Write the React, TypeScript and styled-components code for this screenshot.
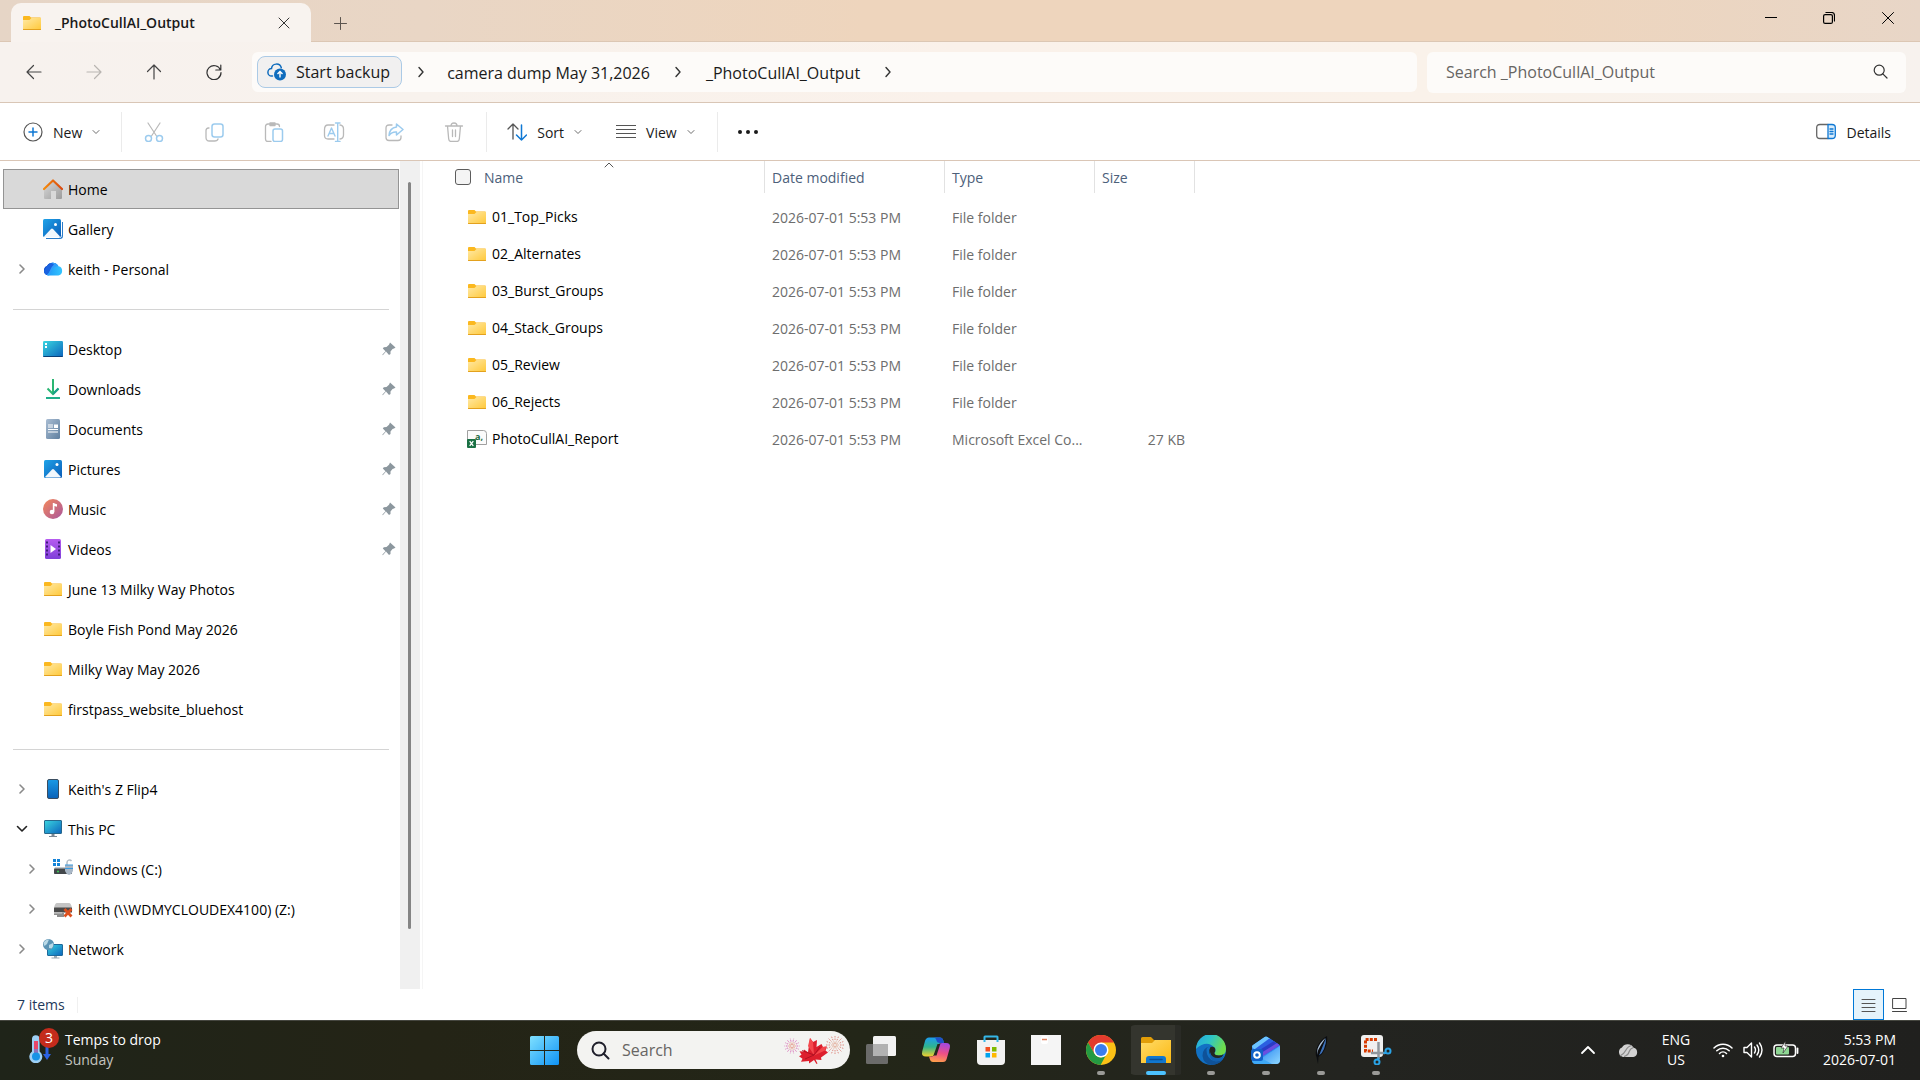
import React from "react";
import styled, { createGlobalStyle } from "styled-components";

const GlobalStyle = createGlobalStyle`
  *, *::before, *::after { box-sizing: border-box; }
  html, body { margin: 0; padding: 0; background: #fff; }
  body, button, input, table {
    font-family: "Open Sans", "Noto Sans", "Segoe UI", sans-serif;
    font-size: 14px;
    line-height: 20px;
    color: #1a1a1a;
  }
  button { border: 0; background: none; padding: 0; margin: 0; cursor: default; }
  svg { display: block; flex: none; }
`;

const Screen = styled.div`
  display: flex;
  flex-direction: column;
  min-height: 100vh;
`;

/* ---------- title bar ---------- */

const TitleBar = styled.header`
  display: flex;
  height: 42px;
  padding: 3px 2px 0 11px;
  background: linear-gradient(90deg, #e6d5c6 0%, #e9d6c5 22%, #eed5bd 45%, #eed5bd 80%, #e8d6c7 100%);
  box-shadow: inset 0 -1px 0 #dcc7b4;
`;

const Tab = styled.div`
  display: flex;
  align-items: center;
  width: 300px;
  padding: 0 20px 0 12px;
  gap: 14px;
  border-radius: 10px 10px 0 0;
  background: #f8f3ef;
`;

const TabTitle = styled.span`
  flex: 1;
  font-weight: 600;
`;

const IconButton = styled.button<{ $w?: number; $h?: number }>`
  display: flex;
  align-items: center;
  justify-content: center;
  flex: none;
  width: ${(p) => p.$w ?? 28}px;
  height: ${(p) => p.$h ?? 28}px;
`;

const NewTab = styled(IconButton)`
  margin: 6px auto 0 15px;
`;

const WindowButtons = styled.div`
  display: flex;
  height: 30px;
`;

/* ---------- navigation bar ---------- */

const NavBar = styled.div`
  display: flex;
  align-items: center;
  height: 61px;
  padding: 0 14px 0 4px;
  background: linear-gradient(90deg, #f7f2ee 0%, #f8f2ed 22%, #faf1ea 50%, #faf2ea 75%, #f7f2ee 100%);
  border-bottom: 1px solid #d9c6b6;
`;

const NavButtons = styled.div`
  display: flex;
  margin-right: 8px;
`;

const AddressBar = styled.nav`
  display: flex;
  align-items: center;
  flex: 1;
  height: 40px;
  padding-left: 5px;
  border-radius: 6px;
  background: #fdfbf9;
`;

const BackupButton = styled.button`
  display: flex;
  align-items: center;
  height: 32px;
  padding: 0 11px 0 9px;
  gap: 9px;
  border: 1px solid #abcae6;
  border-radius: 8px;
  background: #f1f0f0;
  font-size: 16px;
`;

const Crumb = styled.a`
  padding-top: 1px;
  font-size: 16px;
  line-height: 24px;
  color: #1a1a1a;
  text-decoration: none;
`;

const CrumbArrow = styled.span<{ $first?: boolean }>`
  display: flex;
  justify-content: center;
  width: ${(p) => (p.$first ? 37 : 56)}px;
  margin-right: ${(p) => (p.$first ? 8 : 0)}px;
`;

const SearchField = styled.label`
  display: flex;
  align-items: center;
  width: 479px;
  height: 41px;
  margin-left: 10px;
  padding: 0 17px 0 19px;
  border-radius: 6px;
  background: #fdfbf9;
`;

const TextInput = styled.input`
  flex: 1;
  min-width: 0;
  padding: 0;
  border: 0;
  outline: 0;
  background: none;
  font-size: 16px;
  line-height: 24px;
  &::placeholder { color: #676563; opacity: 1; }
`;

/* ---------- command bar ---------- */

const CommandBar = styled.div`
  display: flex;
  align-items: center;
  height: 58px;
  padding: 0 23px;
  border-bottom: 1px solid #dac6b6;
  background: #fff;
`;

const Command = styled.button<{ $gap?: number }>`
  display: flex;
  align-items: center;
  height: 40px;
  gap: ${(p) => p.$gap ?? 10}px;
`;

const Label = styled.span`
  padding-top: 2px;
`;

const CommandGroup = styled.div<{ $gap?: number; $pad: string }>`
  display: flex;
  align-items: center;
  height: 40px;
  gap: ${(p) => p.$gap ?? 0}px;
  padding: ${(p) => p.$pad};
  border-right: 1px solid #ebebeb;
`;

const DetailsSlot = styled.div`
  margin-left: auto;
  padding-right: 6px;
`;

/* ---------- body ---------- */

const Body = styled.div`
  display: flex;
  flex: 1;
`;

const Sidebar = styled.nav`
  width: 400px;
  padding: 8px 1px 0 3px;
`;

const TreeRow = styled.button<{ $selected?: boolean; $depth?: number }>`
  display: flex;
  align-items: center;
  width: 100%;
  height: 40px;
  padding: 0 2px 0 ${(p) => 10 + (p.$depth ?? 0) * 10}px;
  border: 1px solid ${(p) => (p.$selected ? "#949494" : "transparent")};
  background: ${(p) => (p.$selected ? "#d9d9d9" : "transparent")};
  color: #000;
  text-align: left;
`;

const Twisty = styled.span`
  display: flex;
  justify-content: center;
  width: 16px;
  margin-right: 13px;
`;

const RowLabel = styled(Label)`
  flex: 1;
  padding-left: 5px;
  white-space: nowrap;
`;

const Separator = styled.hr`
  height: 1px;
  margin: 20px 10px 19px;
  border: 0;
  background: #d4d4d4;
`;

const ScrollTrack = styled.div`
  display: flex;
  width: 20px;
  padding: 21px 0 60px 8px;
  background: #f0f0f0;
`;

const ScrollThumb = styled.div`
  width: 3px;
  border-radius: 2px;
  background: #858585;
`;

const FilePane = styled.main`
  flex: 1;
  margin-left: 2px;
  border-left: 1px solid #f5f5f5;
`;

const FileTable = styled.table`
  table-layout: fixed;
  width: 772px;
  border-collapse: collapse;
  th, td { padding: 0; font-weight: 400; text-align: left; }
  th { height: 38px; vertical-align: top; }
  td { height: 37px; color: #6d6d6d; padding-left: 7px; }
  td:first-child { padding-left: 44px; color: #000; }
`;

const Col = styled.col<{ $w: number }>`
  width: ${(p) => p.$w}px;
`;

const HeadCell = styled.div<{ $first?: boolean }>`
  position: relative;
  display: flex;
  align-items: center;
  height: 32px;
  gap: 13px;
  padding-left: ${(p) => (p.$first ? 32 : 7)}px;
  border-right: 1px solid #e2e2e2;
  color: #4c607a;
`;

const SortMark = styled.span`
  position: absolute;
  top: 1px;
  left: 50%;
  margin-left: 10px;
`;

const Tick = styled.input`
  appearance: none;
  width: 16px;
  height: 16px;
  margin: 0;
  border: 1px solid #5c5c5c;
  border-radius: 3px;
  background: #f4f4f4;
`;

const FileName = styled.span`
  display: flex;
  gap: 5px;
  padding-bottom: 1px;
`;

const Clip = styled.span`
  display: block;
  overflow: hidden;
  white-space: nowrap;
  text-overflow: ellipsis;
  padding-right: 2px;
`;

const SizeCell = styled.td`
  && { text-align: right; padding-right: 10px; }
`;

/* ---------- status bar ---------- */

const StatusBar = styled.footer`
  display: flex;
  align-items: center;
  height: 31px;
  padding: 0 6px 0 17px;
  color: #1e395b;
`;

const StatusText = styled.span`
  padding-right: 12px;
  line-height: 16px;
  border-right: 1px solid #f0f0f0;
`;

const ViewButtons = styled.div`
  display: flex;
  margin-left: auto;
`;

const ViewButton = styled(IconButton)<{ $on?: boolean }>`
  border: 1px solid ${(p) => (p.$on ? "#0078d7" : "transparent")};
  background: ${(p) => (p.$on ? "#e5f3fb" : "transparent")};
`;

/* ---------- taskbar ---------- */

const Taskbar = styled.footer`
  display: grid;
  grid-template-columns: 1fr auto 1fr;
  align-items: center;
  height: 60px;
  padding-bottom: 1px;
  border-top: 1px solid #45463f;
  background: linear-gradient(90deg, #1f2419 0%, #242416 22%, #232618 45%, #232420 70%, #20201e 100%);
`;

const Weather = styled.button`
  display: flex;
  align-items: center;
  justify-self: start;
  padding-left: 29px;
  gap: 6px;
  text-align: left;
`;

const WeatherIcon = styled.span`
  position: relative;
  width: 30px;
  height: 44px;
  padding-top: 7px;
`;

const Badge = styled.span`
  position: absolute;
  top: 0;
  right: 0;
  width: 20px;
  height: 20px;
  border-radius: 50%;
  background: #c42b1c;
  color: #fff;
  text-align: center;
`;

const Line = styled.span<{ $dim?: boolean }>`
  display: block;
  color: ${(p) => (p.$dim ? "#c4c4c0" : "#fff")};
`;

const TaskCluster = styled.div`
  display: flex;
  align-items: center;
`;

const TaskSearch = styled.label`
  display: flex;
  align-items: center;
  width: 273px;
  height: 38px;
  margin: 0 4px 0 5px;
  padding: 0 6px 0 14px;
  gap: 12px;
  border-radius: 19px;
  background: #f3f3f1;
`;

const TaskButton = styled.button<{ $active?: boolean }>`
  position: relative;
  width: 55px;
  height: 50px;
  padding: 10px 0 10px 12px;
  ${(p) =>
    p.$active &&
    `
    border-radius: 6px;
    background: linear-gradient(90deg, transparent 2px, #34352e 2px 46px, #2a2b26 46px 52px, transparent 52px);
  `}
`;

const RunMark = styled.span<{ $active?: boolean }>`
  position: absolute;
  bottom: 0;
  left: ${(p) => (p.$active ? 17 : 23)}px;
  width: ${(p) => (p.$active ? 20 : 8)}px;
  height: 4px;
  border-radius: 2px;
  background: ${(p) => (p.$active ? "#4cc2ff" : "#9a9a97")};
`;

const Tray = styled.div`
  display: flex;
  align-items: center;
  justify-self: end;
  padding-right: 24px;
`;

const TrayButton = styled.button<{ $w: number }>`
  display: flex;
  align-items: center;
  justify-content: center;
  width: ${(p) => p.$w}px;
  height: 48px;
  text-align: center;
`;

const TrayStatus = styled.button`
  display: flex;
  align-items: center;
  gap: 10px;
  margin: 0 24px 0 9px;
`;

const Clock = styled.button`
  text-align: right;
`;

/* ---------- icons ---------- */

type Stroke = { w: number; h?: number; d: string; c?: string; s?: number; children?: React.ReactNode };
const Glyph = ({ w, h = w, d, c = "#1a1a1a", s = 1, children }: Stroke) => (
  <svg width={w} height={h} viewBox={`0 0 ${w} ${h}`} fill="none" stroke={c} strokeWidth={s} strokeLinecap="round" strokeLinejoin="round" aria-hidden>
    <path d={d} />
    {children}
  </svg>
);

const ChevronRight = ({ c = "#8a8a8a", s = 2 }: { c?: string; s?: number }) => <Glyph w={8} h={12} d="M2 2l4 4-4 4" c={c} s={s} />;
const CrumbChevron = () => <Glyph w={8} h={12} d="M2 1.5l4 4.5-4 4.5" c="#333" s={1.4} />;
const SmallDown = () => <Glyph w={8} h={6} d="M1 1.5l3 3 3-3" c="#6d6d6d" />;

const G = "#b9b9b9";
const B = "#9ccbee";

const FolderIcon = ({ w = 20 }: { w?: number }) => (
  <svg width={w} height="20" viewBox={w === 18 ? "1 0 18 20" : "0 0 20 20"} aria-hidden>
    <defs>
      <linearGradient id="fold" x1="0" y1="0" x2="1" y2="1">
        <stop offset="0" stopColor="#ffe9a6" />
        <stop offset="1" stopColor="#ffc93b" />
      </linearGradient>
    </defs>
    <path d="M1 4q0-1 1-1h5.500l1.500 1.500H18q1 0 1 1V8H1z" fill="#fbb81f" />
    <path d="M1 7h6.500L9.500 5H19v11.500H1z" fill="url(#fold)" />
    <path d="M1 16h18v.5q0 .5-.8.500H1.800q-.8 0-.8-.5z" fill="#e3a11e" />
  </svg>
);

const HomeIcon = () => (
  <svg width="20" height="20" viewBox="0 0 20 20" aria-hidden>
    <defs>
      <linearGradient id="hb" x1="0" y1="0" x2="1" y2="1"><stop offset="0" stopColor="#d9d9d9" /><stop offset="1" stopColor="#9c9c9c" /></linearGradient>
      <linearGradient id="hr" x1="0" y1="0" x2="1" y2="0"><stop offset="0" stopColor="#f58b0c" /><stop offset="1" stopColor="#d9480f" /></linearGradient>
    </defs>
    <path d="M1 10l9-8 9 8v9q0 1-1 1h-5v-8H8v8H2q-1 0-1-1z" fill="url(#hb)" />
    <path d="M1 10l9-8.500 9 8.500" fill="none" stroke="url(#hr)" strokeWidth="2.200" strokeLinecap="round" strokeLinejoin="round" />
  </svg>
);

const PictureIcon = ({ stack }: { stack?: boolean }) => (
  <svg width="20" height="20" viewBox="0 0 20 20" aria-hidden>
    <defs><linearGradient id="pic" x1="0" y1="0" x2="1" y2="1"><stop offset="0" stopColor="#1fa3e8" /><stop offset="1" stopColor="#0a5cb8" /></linearGradient></defs>
    {stack && <path d="M19 3v14q0 2-2 2H3" fill="none" stroke="#2b7cc9" strokeWidth="2" />}
    {stack && <path d="M18.500 2v14.500q0 2-2 2H2" fill="none" stroke="#fff" strokeWidth="1" />}
    <rect x={stack ? 0 : 1} y={stack ? 0 : 1} width="18" height="18" rx="1.500" fill="url(#pic)" />
    <path d={stack ? "M1 17.500l7-7.500q1-1 2 0l7 7.500q-.5.500-1 .5H2q-.6 0-1-.5z" : "M2 18l7-7.500q1-1 2 0l7 7.500q-.4.400-1 .4H3q-.6 0-1-.4z"} fill="#f2f8fd" />
    <circle cx={stack ? 12.5 : 14} cy="5.500" r="1.500" fill="#fff" />
  </svg>
);

const OneDriveIcon = () => (
  <svg width="20" height="20" viewBox="0 0 20 20" aria-hidden>
    <defs>
      <clipPath id="cloud">
        <path d="M5 16.500A5 5 0 0 1 4 7A6.500 6.500 0 0 1 15.500 7.300A4.700 4.700 0 0 1 15.300 16.500z" />
      </clipPath>
      <linearGradient id="od" x1="0" y1="0" x2="1" y2="0"><stop offset="0" stopColor="#1a8cf5" /><stop offset="1" stopColor="#35c8ff" /></linearGradient>
    </defs>
    <g clipPath="url(#cloud)">
      <rect width="20" height="20" fill="url(#od)" />
      <path d="M0 0h9L3.500 17H0z" fill="#1747c4" />
      <path d="M2 17q4-2 5.500-6T14 5.500L10 2 4 7 0 13z" fill="#1a63e0" />
      <path d="M6 2h9l2 5q-5-.5-7 2.500T6 17H2q4-2 5-5.500T11 5.500z" fill="#2f9dfa" />
    </g>
  </svg>
);

const DesktopIcon = () => (
  <svg width="20" height="20" viewBox="0 0 20 20" aria-hidden>
    <defs><linearGradient id="dk" x1="0" y1="0" x2="1" y2="1"><stop offset="0" stopColor="#3ad6e0" /><stop offset="1" stopColor="#0c64bd" /></linearGradient></defs>
    <rect y="2" width="20" height="16" rx="1.200" fill="url(#dk)" />
    <path d="M0 17h20q0 1-1.200 1H1.200Q0 18 0 17z" fill="#0a3f78" />
    <path d="M2 4h2v2H2zM2 7h2v2H2z" fill="#fff" />
  </svg>
);

const DownloadIcon = () => (
  <svg width="20" height="20" viewBox="0 0 20 20" fill="none" strokeWidth="2" aria-hidden>
    <path d="M10 0v15M4.500 9.500L10 15l5.500-5.500" stroke="#2bb673" />
    <path d="M10 15l5.500-5.500" stroke="#1aa08c" />
    <path d="M3 19h14" stroke="#1fae8a" />
  </svg>
);

const DocumentIcon = () => (
  <svg width="20" height="20" viewBox="0 0 20 20" aria-hidden>
    <defs><linearGradient id="dc" x1="0" y1="0" x2="1" y2="1"><stop offset="0" stopColor="#a9bdd3" /><stop offset="1" stopColor="#5f7f9f" /></linearGradient></defs>
    <rect x="3" width="14" height="20" rx="1.500" fill="url(#dc)" />
    <path d="M5 6h5M5 8h5M5 10.500h10M5 13h10" stroke="#fff" strokeWidth="1.200" />
    <rect x="11" y="5.500" width="4" height="3.500" fill="#fff" />
  </svg>
);

const MusicIcon = () => (
  <svg width="20" height="20" viewBox="0 0 20 20" aria-hidden>
    <defs><linearGradient id="mu" x1="0" y1="0" x2="1" y2="1"><stop offset="0" stopColor="#f5895a" /><stop offset="1" stopColor="#a9569d" /></linearGradient></defs>
    <circle cx="10" cy="10" r="10" fill="url(#mu)" />
    <path d="M10 4l4 1.200v2.500L11.200 7v6" fill="#fff" />
    <rect x="9.800" y="4" width="1.500" height="9" fill="#fff" />
    <circle cx="9" cy="13" r="2.300" fill="#fff" />
  </svg>
);

const VideoIcon = () => (
  <svg width="20" height="20" viewBox="0 0 20 20" aria-hidden>
    <defs><linearGradient id="vi" x1="0" y1="0" x2="0" y2="1"><stop offset="0" stopColor="#b65cf0" /><stop offset="1" stopColor="#7f3fd9" /></linearGradient></defs>
    <rect x="2" width="16" height="20" rx="1.500" fill="url(#vi)" />
    <path d="M4 2.500v16M16 2.500v16" stroke="#3f1c7a" strokeWidth="2" strokeDasharray="2 2" />
    <path d="M7.500 6v8l5.500-4z" fill="#fff" />
  </svg>
);

const PhoneIcon = () => (
  <svg width="20" height="20" viewBox="0 0 20 20" aria-hidden>
    <defs><linearGradient id="ph" x1="0" y1="0" x2="0" y2="1"><stop offset="0" stopColor="#1a9ae6" /><stop offset="1" stopColor="#0a62b8" /></linearGradient></defs>
    <rect x="4.500" y=".5" width="11" height="19" rx="1.500" fill="url(#ph)" stroke="#3b4d60" />
  </svg>
);

const PcIcon = () => (
  <svg width="20" height="20" viewBox="0 0 20 20" aria-hidden>
    <path d="M8.500 15h3v2H14v1H6v-1h2.500z" fill="#7c8894" />
    <rect x="1.500" y="1.500" width="17" height="13" rx=".5" fill="url(#dk)" stroke="#27688c" />
  </svg>
);

const DriveIcon = () => (
  <svg width="20" height="20" viewBox="0 0 20 20" aria-hidden>
    <path d="M0 0h3v3H0zM4 0h3v3H4zM0 4h3v3H0zM4 4h3v3H4z" fill="#1584d8" />
    <path d="M2 8h16v2H1z" fill="#c6cacd" />
    <rect x="1" y="9.500" width="18" height="5.500" rx=".8" fill="#43474b" />
    <circle cx="5" cy="12.500" r="1" fill="#3fd15a" />
    <path d="M14 6V3.500a2.500 2.500 0 0 1 4.500-1.500" fill="none" stroke="#b4bdc6" strokeWidth="1.500" />
    <path d="M12 6h8v6q-1 3-4 4-3-1-4-4z" fill="#a9b7c6" />
    <path d="M12 6h8M12 9.500h8" stroke="#3a9be0" strokeWidth="1" />
  </svg>
);

const NetDriveIcon = () => (
  <svg width="20" height="20" viewBox="0 0 20 20" aria-hidden>
    <path d="M4 4h12q2 0 3 5H1q1-5 3-5z" fill="#c4c4c4" />
    <rect x="1" y="8.500" width="18" height="5" rx=".5" fill="#4a4a4a" />
    <path d="M1 14h10v4H4v-2H1z" fill="#8d8d8d" />
    <path d="M1 14h8" stroke="#ccc" />
    <path d="M11.500 10l7 7.500m0-7.500l-7 7.500" stroke="#dd4f1e" strokeWidth="2.700" />
  </svg>
);

const NetworkIcon = () => (
  <svg width="20" height="20" viewBox="0 0 20 20" aria-hidden>
    <path d="M11 16h3v2.500h2.500v1h-8v-1H11z" fill="#9aa7b2" />
    <rect x="4.500" y="5.500" width="15" height="11" rx=".5" fill="url(#dk)" stroke="#1e6a9c" />
    <circle cx="5.500" cy="5.500" r="5.500" fill="#5b93b4" />
    <path d="M1 3q2-3 5-2.500L4 5 1.500 7Q0 5 1 3zM6 6l4-2q1 3-1.500 5.500L6 9z" fill="#b9d9e6" />
  </svg>
);

const PinIcon = () => (
  <svg width="14" height="14" viewBox="0 0 14 14" aria-hidden>
    <path d="M8 .5l5.500 5-1.500 1-1.500.5-2 2.500v2.500L7 13l-3-3.500L.8 13.200l-.5-.4L3.500 9.300.8 6.500l1-1.200 2.700-.3 2.500-2.300z" fill="#8c979e" />
  </svg>
);

const CsvIcon = () => (
  <svg width="20" height="20" viewBox="0 0 20 20" aria-hidden>
    <path d="M.5 1.500h16q3 0 3 3v11h-19z" fill="#fbfbfb" stroke="#a0a0a0" />
    <text x="8" y="11" fontSize="9" fontWeight="700" fill="#1c6b41" fontFamily="Open Sans, sans-serif">a,</text>
    <rect y="10" width="9" height="9" rx="1" fill="#1a7044" />
    <path d="M2.700 12.200l3.600 4.600m0-4.600l-3.600 4.600" stroke="#fff" strokeWidth="1.300" />
  </svg>
);

const BackupIcon = () => (
  <svg width="20" height="20" viewBox="0 0 20 20" fill="none" aria-hidden>
    <path d="M5.500 14H4.700a3.700 3.700 0 0 1-.2-7.400A5 5 0 0 1 14.300 5.800" stroke="#0f6cbd" strokeWidth="1.500" strokeLinecap="round" />
    <circle cx="13" cy="12.500" r="6" fill="#0f6cbd" />
    <path d="M13 15.500v-6M10.500 12l2.500-2.500 2.500 2.500" stroke="#fff" strokeWidth="1.400" />
  </svg>
);

/* taskbar pictures */

const StartIcon = () => (
  <svg width="30" height="30" viewBox="-1 -1 30 30" aria-hidden>
    <defs><linearGradient id="st" x1="0" y1="0" x2="1" y2="1"><stop offset="0" stopColor="#7fe0ff" /><stop offset="1" stopColor="#0f93f5" /></linearGradient></defs>
    <path d="M1.500 0H14v14H0V1.500Q0 0 1.500 0zM15 0h12.500Q29 0 29 1.500V14H15zM0 15h14v14H1.500Q0 29 0 27.500zM15 15h14v12.500q0 1.500-1.500 1.500H15z" fill="url(#st)" />
  </svg>
);

const rays = (cx: number, cy: number, r0: number, r: number, n: number) =>
  Array.from({ length: n }, (_, i) => {
    const a = (i / n) * Math.PI * 2;
    return `M${cx + Math.cos(a) * r0} ${cy + Math.sin(a) * r0}L${cx + Math.cos(a) * r} ${cy + Math.sin(a) * r}`;
  }).join("");

const MapleIcon = () => (
  <svg width="60" height="30" viewBox="0 0 60 30" aria-hidden>
    <path d={rays(8, 11, 4.5, 7.5, 14)} stroke="#d871b8" strokeWidth="1" strokeDasharray="1.500 .8" />
    <path d={rays(8, 11, 1, 4, 10)} stroke="#e39a8a" strokeWidth=".8" />
    <path d={rays(51, 10, 5, 9, 16)} stroke="#d8736b" strokeWidth=".8" strokeDasharray="1.500 1" />
    <path d={rays(51, 10, 1, 4, 10)} stroke="#e0a08c" strokeWidth=".7" />
    <path d="M26 3l3 4 4-2-.5 7 5-3 1.500 3 4-.5-1.500 4 2.500 2-7 5 .5 2.500-6-.5 2 4-1 .6-2.500-4.200-5 3.500v-2.500l-8 .8 1.500-3-3.500-2.500 2.500-1.500-2-3.500 4 .3.500-2 4 2.800z" fill="#dd1f2d" />
    <path d="M26 3l3 4 1 13-6-9zM38.500 12l4-.5-1.500 4-11 5z" fill="#f4484d" />
    <path d="M30 20l-12-4.500M30 20l-9 4M30 20l6-8" stroke="#a50f20" strokeWidth=".8" />
  </svg>
);

const TaskViewIcon = () => (
  <svg width="30" height="30" viewBox="0 0 30 30" aria-hidden>
    <rect x="0" y="9" width="22" height="20" rx="1.500" fill="#6b6b6a" />
    <rect x="7" y="1" width="23" height="20" rx="1.500" fill="#f2f2f2" />
    <path d="M7 9h15v12H8.500Q7 21 7 19.500z" fill="#b2b2b2" />
  </svg>
);

const CopilotIcon = () => (
  <svg width="30" height="30" viewBox="0 0 30 30" aria-hidden>
    <defs>
      <linearGradient id="cp1" x1="0" y1="0" x2="0" y2="1"><stop offset="0" stopColor="#1c9df0" /><stop offset=".5" stopColor="#2fb58c" /><stop offset="1" stopColor="#f4d02c" /></linearGradient>
      <linearGradient id="cp2" x1=".5" y1="0" x2=".3" y2="1"><stop offset="0" stopColor="#a648dc" /><stop offset=".5" stopColor="#ee4f86" /><stop offset="1" stopColor="#ffa04a" /></linearGradient>
    </defs>
    <path d="M8 2.500h11q2.500 0 3.300 3L23 8h-3q-2 0-2.800 2.500L13.500 19q-1 2.500-4 2.500H5q-5 0-3.800-5L4 6q1-3.500 4-3.500z" fill="url(#cp1)" />
    <path d="M13 2.500h6q2.500 0 3.300 3L23 8h-4q-3 0-3.500-2.500t-2.500-3z" fill="#1f50c8" />
    <path d="M22 27H12q-2.500 0-3.200-3L8 21.500h2.500q2.500 0 3.500-3l3-8Q18 8 21 8h4q5 0 3.800 5l-3 10.500Q25 27 22 27z" fill="url(#cp2)" />
    <path d="M16.500 9h2.800L15.500 20.500h-3z" fill="#26281f" />
  </svg>
);

const StoreIcon = () => (
  <svg width="30" height="30" viewBox="0 0 30 30" aria-hidden>
    <path d="M1 5h28v21q0 4-4 4H5q-4 0-4-4z" fill="#f2f2f2" />
    <path d="M8.500 7V2q0-.5.500-.5h12q.5 0 .5.500v5" fill="none" stroke="#35b7e8" strokeWidth="2" />
    <path d="M9.500 12H14v4.500H9.500z" fill="#f25022" /><path d="M16 12h4.500v4.500H16z" fill="#7fba00" />
    <path d="M9.500 18H14v4.500H9.500z" fill="#00a4ef" /><path d="M16 18h4.500v4.500H16z" fill="#ffb900" />
  </svg>
);

const BlankAppIcon = () => (
  <svg width="30" height="30" viewBox="0 0 30 30" aria-hidden>
    <rect width="30" height="30" fill="#f5f5f5" />
    <rect x="10" y="1" width="7" height="8" rx="2" fill="#fff" />
    <path d="M11 4.500h5" stroke="#e08260" strokeWidth="1.500" />
  </svg>
);

const ChromeIcon = () => (
  <svg width="30" height="30" viewBox="0 0 30 30" aria-hidden>
    <circle cx="15" cy="15" r="15" fill="#fbc116" />
    <path d="M2 7.500A15 15 0 0 1 28 7.500H15L8.500 18.800z" fill="#e33b2e" />
    <path d="M2 7.500l6.500 11.300Q11 22.500 15 22.500l4.500-1.500-4.900 9A15 15 0 0 1 2 7.500z" fill="#249a42" />
    <circle cx="15" cy="15" r="7.500" fill="#fff" /><circle cx="15" cy="15" r="6" fill="#3b7ded" />
  </svg>
);

const ExplorerIcon = () => (
  <svg width="30" height="30" viewBox="0 0 30 30" aria-hidden>
    <defs><linearGradient id="ex" x1="0" y1="0" x2="1" y2="1"><stop offset="0" stopColor="#ffdb68" /><stop offset="1" stopColor="#fcb912" /></linearGradient></defs>
    <path d="M0 3.500Q0 2 1.500 2H10l3 3h15.500Q30 5 30 6.500V12H0z" fill="#e19d08" />
    <path d="M0 8h11l3-3h16v23H0z" fill="url(#ex)" />
    <path d="M5 28v-4q0-3 3-3h14q3 0 3 3v4z" fill="#1177cf" />
    <path d="M9 24.500h12" stroke="#0b4f96" strokeWidth="1.500" strokeLinecap="round" />
  </svg>
);

const EdgeIcon = () => (
  <svg width="30" height="30" viewBox="0 0 30 30" aria-hidden>
    <defs>
      <linearGradient id="ed" x1="0" y1="0" x2="1" y2=".4"><stop offset="0" stopColor="#24a5e2" /><stop offset=".5" stopColor="#2ec5c7" /><stop offset="1" stopColor="#6fdc4c" /></linearGradient>
    </defs>
    <circle cx="15" cy="15" r="15" fill="#1271c4" />
    <path d="M0 14A15 15 0 0 1 30 14q0 6.500-7 6.500-5 0-4.500-2.500 2-3 0-5.500Q13 6.500 5.500 10 1.500 12 0 14z" fill="url(#ed)" />
    <path d="M10.500 15q0 9 8 11 5 1 9-2.500-4 6.500-12 6.500-8-1-9-9 0-9 8-9.500-4 0-4 3.500z" fill="#0f5299" />
    <path d="M14.500 12q4.500-1 4.800 2.500.2 2-1 3.500.5 2.500 4.700 2.500 3 0 4.500-1.500-1 4-6 4.500-7 .5-8-5.500-.5-4 1-6z" fill="#232420" />
    <path d="M14 17q1.500 6 8 6 3.500 0 6-2.500l-1.500 4q-4 2.500-8.500 1.500-5-2-4-9z" fill="#1260b0" />
  </svg>
);

const OutlookIcon = () => (
  <svg width="30" height="30" viewBox="0 0 30 30" aria-hidden>
    <defs>
      <linearGradient id="ol" x1="0" y1="0" x2="1" y2="1"><stop offset="0" stopColor="#1f7df0" /><stop offset="1" stopColor="#8fd8ff" /></linearGradient>
      <clipPath id="olc"><path d="M2 10L13.500 2q1.500-1 3 0L28 9.500q1 .8 1 2V25q0 4-4 4H5q-4 0-4-4V12q0-1.300 1-2z" /></clipPath>
    </defs>
    <g clipPath="url(#olc)">
      <rect width="30" height="30" fill="#2f8cf0" />
      <path d="M0 11L15 1l5 3L4 15z" fill="#6cc4ff" />
      <path d="M19 3l5 3.500L8 17l-4-3z" fill="#2b5fe0" />
      <path d="M23 6l6 4-16 10-6-4z" fill="#2a3cc6" />
      <path d="M29 10L12 21l-2-3L26 8z" fill="#6a4fe0" />
      <path d="M29 11v18H9q-3-1-1-4z" fill="url(#ol)" />
      <path d="M1 18l20 11H1z" fill="#3fa9f7" />
    </g>
    <rect x="0" y="14" width="12" height="12" rx="2.500" fill="#1262c8" />
    <circle cx="6" cy="20" r="2.800" fill="none" stroke="#fff" strokeWidth="2" />
  </svg>
);

const FeatherIcon = () => (
  <svg width="30" height="30" viewBox="0 0 30 30" aria-hidden>
    <path d="M21 1q1 6-2 13-2 5-6.500 8l-.500 7-1.500-7q-2-4 1-11Q15 4 21 1z" fill="#0b0d10" />
    <path d="M20 3q.5 5-2 11-1.500 4-5 6.500z" fill="#3d71b8" />
    <path d="M19.500 3Q14 7 11.500 14l-.5 6q1-6 4-10z" fill="#a8bdd4" />
  </svg>
);

const SnipIcon = () => (
  <svg width="32" height="30" viewBox="0 0 32 30" aria-hidden>
    <rect x="0" y="0" width="22" height="22" rx="3" fill="#f0f0f0" />
    <path d="M16 4.500H4.500V16H12" fill="none" stroke="#d83b01" strokeWidth="3" strokeDasharray="3 1.200" />
    <path d="M17.500 7v17M10 18h14" stroke="#8f969c" strokeWidth="2.500" />
    <circle cx="27" cy="16" r="2.500" fill="none" stroke="#2aa3e6" strokeWidth="2" />
    <circle cx="16" cy="27" r="2.500" fill="none" stroke="#2aa3e6" strokeWidth="2" />
    <path d="M22.500 18h2l1-.5M17.500 22.500v1l-.5 1.500" stroke="#2aa3e6" strokeWidth="2" />
  </svg>
);

const ThermometerIcon = () => (
  <svg width="24" height="28" viewBox="0 0 24 28" aria-hidden>
    <path d="M3 4a3.800 3.800 0 0 1 7.600 0v12.500a6.500 6.500 0 1 1-7.600 0z" fill="#9ed0f5" />
    <rect x="5" y="6" width="4" height="14" fill="#e8476a" />
    <rect x="5" y="14" width="4" height="6" fill="#8f6fb8" />
    <circle cx="7" cy="21.500" r="4" fill="#1793e6" />
    <path d="M16.500 10h3v9h2.500l-4 6-4-6h2.500z" fill="#2b62e3" />
  </svg>
);

const TrayCloud = () => (
  <svg width="20" height="14" viewBox="0 0 20 14" aria-hidden>
    <path d="M5 14A5 5 0 0 1 4 4.500A6.500 6.500 0 0 1 15.500 4.800A4.700 4.700 0 0 1 15.300 14z" fill="#d2d2d2" />
    <path d="M2 13Q6 11 8 7t6-4.500M6 13.500q4-1 5-4.500t4.500-4.500" fill="none" stroke="#8b8b8b" strokeWidth="1.200" />
  </svg>
);

/* ---------- data ---------- */

type Node = { label: string; icon: React.ReactNode; open?: boolean; closed?: boolean; depth?: number; pinned?: boolean; selected?: boolean };

const groups: Node[][] = [
  [
    { label: "Home", icon: <HomeIcon />, selected: true },
    { label: "Gallery", icon: <PictureIcon stack /> },
    { label: "keith - Personal", icon: <OneDriveIcon />, closed: true },
  ],
  [
    { label: "Desktop", icon: <DesktopIcon />, pinned: true },
    { label: "Downloads", icon: <DownloadIcon />, pinned: true },
    { label: "Documents", icon: <DocumentIcon />, pinned: true },
    { label: "Pictures", icon: <PictureIcon />, pinned: true },
    { label: "Music", icon: <MusicIcon />, pinned: true },
    { label: "Videos", icon: <VideoIcon />, pinned: true },
    { label: "June 13 Milky Way Photos", icon: <FolderIcon /> },
    { label: "Boyle Fish Pond May 2026", icon: <FolderIcon /> },
    { label: "Milky Way May 2026", icon: <FolderIcon /> },
    { label: "firstpass_website_bluehost", icon: <FolderIcon /> },
  ],
  [
    { label: "Keith's Z Flip4", icon: <PhoneIcon />, closed: true },
    { label: "This PC", icon: <PcIcon />, open: true },
    { label: "Windows (C:)", icon: <DriveIcon />, closed: true, depth: 1 },
    { label: "keith (\\\\WDMYCLOUDEX4100) (Z:)", icon: <NetDriveIcon />, closed: true, depth: 1 },
    { label: "Network", icon: <NetworkIcon />, closed: true },
  ],
];

const stamp = "2026-07-01 5:53 PM";
const files = [
  ...["01_Top_Picks", "02_Alternates", "03_Burst_Groups", "04_Stack_Groups", "05_Review", "06_Rejects"].map((name) => ({
    name,
    type: "File folder",
    size: "",
    icon: <FolderIcon />,
  })),
  { name: "PhotoCullAI_Report", type: "Microsoft Excel Co...", size: "27 KB", icon: <CsvIcon /> },
];

const tasks: { name: string; icon: React.ReactNode; run?: boolean; active?: boolean }[] = [
  { name: "Task view", icon: <TaskViewIcon /> },
  { name: "Copilot", icon: <CopilotIcon /> },
  { name: "Store", icon: <StoreIcon /> },
  { name: "App", icon: <BlankAppIcon /> },
  { name: "Chrome", icon: <ChromeIcon />, run: true },
  { name: "File Explorer", icon: <ExplorerIcon />, run: true, active: true },
  { name: "Edge", icon: <EdgeIcon />, run: true },
  { name: "Outlook", icon: <OutlookIcon />, run: true },
  { name: "Feather", icon: <FeatherIcon />, run: true },
  { name: "Snipping Tool", icon: <SnipIcon />, run: true },
];

const editCommands: { name: string; icon: React.ReactNode }[] = [
  {
    name: "Cut",
    icon: (
      <Glyph w={20} d="M4 1l8.500 13M16 1L7.500 14" c={G} s={1.2}>
        <circle cx="4.500" cy="16.500" r="3" stroke={B} strokeWidth="1.500" /><circle cx="15.500" cy="16.500" r="3" stroke={B} strokeWidth="1.500" />
      </Glyph>
    ),
  },
  {
    name: "Copy",
    icon: (
      <Glyph w={20} d="M5 6H4.500Q2 6 2 8.500v7Q2 19 5.500 19h5q3 0 3.500-2" c={G} s={1.3}>
        <rect x="8" y="2" width="11" height="13" rx="2.500" stroke={B} strokeWidth="1.500" />
      </Glyph>
    ),
  },
  {
    name: "Paste",
    icon: (
      <Glyph w={20} d="M7 19.500H4q-2.500 0-2.500-2.500V4.500Q1.500 2 4 2h9q2.500 0 2.500 2.500M6 1h5v2.500H6z" c={G} s={1.3}>
        <rect x="9" y="7" width="9.500" height="12.500" rx="2" stroke={B} strokeWidth="1.500" />
      </Glyph>
    ),
  },
  {
    name: "Rename",
    icon: (
      <Glyph w={22} h={20} d="M11 17H5q-3.500 0-3.500-3.500v-6Q1.500 3 5 3h6M17 3q3.500.500 3.500 4v6q0 3.500-3.500 4" c={G} s={1.3}>
        <path d="M5 14l3.500-8L12 14M6.200 11.500h4.500M12.500 1h4.500M12.500 19.500H17M14.700 1v18.500" stroke={B} strokeWidth="1.400" />
      </Glyph>
    ),
  },
  {
    name: "Share",
    icon: (
      <Glyph w={20} d="M8 3H5Q2 3 2 6v9.500q0 3 3 3h9q3 0 3-3V14" c={G} s={1.3}>
        <path d="M12.500 2l6.500 5.500-6.500 5.500V10Q8 9.500 5 13.500 5.500 6 12.500 5z" stroke={B} strokeWidth="1.500" />
      </Glyph>
    ),
  },
  {
    name: "Delete",
    icon: <Glyph w={20} d="M1.500 4h17M7 4q0-3 3-3t3 3M3.500 4l1.200 13q.3 2.500 2.500 2.500h5.600q2.200 0 2.500-2.500L16.500 4M8.500 8v6.500M11.500 8v6.500" c={G} s={1.3} />,
  },
];

/* ---------- page ---------- */

const Tree = () => (
  <Sidebar aria-label="Folders">
    {groups.map((group, g) => (
      <React.Fragment key={g}>
        {g > 0 && <Separator />}
        {group.map((n) => (
          <TreeRow key={n.label} $selected={n.selected} $depth={n.depth}>
            <Twisty>
              {n.closed && <ChevronRight s={1.6} />}
              {n.open && <Glyph w={12} h={8} d="M1.500 1.500L6 6l4.500-4.500" c="#222" s={1.6} />}
            </Twisty>
            {n.icon}
            <RowLabel>{n.label}</RowLabel>
            {n.pinned && <PinIcon />}
          </TreeRow>
        ))}
      </React.Fragment>
    ))}
  </Sidebar>
);

export default function App() {
  return (
    <Screen>
      <GlobalStyle />
      <TitleBar>
        <Tab>
          <FolderIcon w={18} />
          <TabTitle>_PhotoCullAI_Output</TabTitle>
          <IconButton $w={14} aria-label="Close tab"><Glyph w={12} d="M1 1l10 10M11 1L1 11" c="#333" /></IconButton>
        </Tab>
        <NewTab aria-label="New tab"><Glyph w={13} d="M6.500 .5v12M.5 6.500h12" c="#5b544e" /></NewTab>
        <WindowButtons>
          <IconButton $w={58} $h={30} aria-label="Minimize"><Glyph w={12} d="M0 5.500h12" c="#000" /></IconButton>
          <IconButton $w={58} $h={30} aria-label="Restore">
            <Glyph w={12} d="M3 .5h5.500q3 0 3 3V9" c="#000" s={1.2}><rect x=".6" y="2.600" width="8.800" height="8.800" rx="1.500" /></Glyph>
          </IconButton>
          <IconButton $w={60} $h={30} aria-label="Close"><Glyph w={12} d="M.5 .5l11 11M11.500 .5l-11 11" c="#000" /></IconButton>
        </WindowButtons>
      </TitleBar>

      <NavBar>
        <NavButtons>
          <IconButton $w={60} aria-label="Back"><Glyph w={16} d="M15 8H1M7.500 1.500L1 8l6.500 6.500" c="#444" s={1.2} /></IconButton>
          <IconButton $w={60} aria-label="Forward"><Glyph w={16} d="M1 8h14M8.500 1.500L15 8l-6.500 6.500" c="#b9b5b1" s={1.2} /></IconButton>
          <IconButton $w={60} aria-label="Up"><Glyph w={16} d="M8 15V1M1.500 7.500L8 1l6.500 6.500" c="#444" s={1.2} /></IconButton>
          <IconButton $w={60} aria-label="Refresh"><Glyph w={16} d="M14.500 6A7 7 0 1 0 15 8.500M14.800 1v5h-5" c="#333" s={1.2} /></IconButton>
        </NavButtons>
        <AddressBar aria-label="Address">
          <BackupButton><BackupIcon />Start backup</BackupButton>
          <CrumbArrow $first><CrumbChevron /></CrumbArrow>
          <Crumb href="#">camera dump May 31,2026</Crumb>
          <CrumbArrow><CrumbChevron /></CrumbArrow>
          <Crumb href="#">_PhotoCullAI_Output</Crumb>
          <CrumbArrow><CrumbChevron /></CrumbArrow>
        </AddressBar>
        <SearchField>
          <TextInput type="text" placeholder="Search _PhotoCullAI_Output" aria-label="Search folder" />
          <Glyph w={16} d="M9.800 9.800l4.200 4.200" c="#333" s={1.2}><circle cx="6.200" cy="6.200" r="5" /></Glyph>
        </SearchField>
      </NavBar>

      <CommandBar>
        <CommandGroup $pad="0 21px 0 0">
          <Command>
            <Glyph w={20} d="M10 6v8M6 10h8" c="#0f78d4" s={1.5}><circle cx="10" cy="10" r="9" stroke="#555" strokeWidth="1.200" /></Glyph>
            <Label>New</Label><SmallDown />
          </Command>
        </CommandGroup>
        <CommandGroup $pad="0 2px">
          {editCommands.map((c) => (
            <IconButton key={c.name} $w={60} $h={40} aria-label={c.name} disabled>{c.icon}</IconButton>
          ))}
        </CommandGroup>
        <CommandGroup $pad="0 22px 0 20px" $gap={34}>
          <Command>
            <Glyph w={20} d="M6 17V2M1 7l5-5 5 5" c="#555" s={1.3}><path d="M14.500 3v15M9.500 13l5 5 5-5" stroke="#0f78d4" strokeWidth="1.500" /></Glyph>
            <Label>Sort</Label><SmallDown />
          </Command>
          <Command>
            <Glyph w={20} d="M0 3.500h20M0 7.500h20M0 11.500h20M0 15.500h20" c="#555" />
            <Label>View</Label><SmallDown />
          </Command>
        </CommandGroup>
        <IconButton $w={60} $h={40} aria-label="More">
          <svg width="22" height="6" viewBox="0 0 22 6" fill="#1a1a1a"><circle cx="3" cy="3" r="2" /><circle cx="11" cy="3" r="2" /><circle cx="19" cy="3" r="2" /></svg>
        </IconButton>
        <DetailsSlot>
          <Command>
            <Glyph w={20} d="M12 2.500H4Q.7 2.500.7 5.500v8q0 3 3.300 3h8" c="#666" s={1.3}>
              <path d="M12 2.500h4q3.300 0 3.300 3v8q0 3-3.300 3h-4z" fill="#d8ecfb" stroke="#0f78d4" />
              <path d="M14 7h3M14 9.500h3M14 12h3" stroke="#0f78d4" />
            </Glyph>
            <Label>Details</Label>
          </Command>
        </DetailsSlot>
      </CommandBar>

      <Body>
        <Tree />
        <ScrollTrack><ScrollThumb /></ScrollTrack>
        <FilePane>
          <FileTable>
            <colgroup><Col $w={342} /><Col $w={180} /><Col $w={150} /><Col $w={100} /></colgroup>
            <thead>
              <tr>
                <th>
                  <HeadCell $first>
                    <Tick type="checkbox" aria-label="Select all" />
                    <Label>Name</Label>
                    <SortMark><Glyph w={10} h={6} d="M1 5l4-4 4 4" c="#555" /></SortMark>
                  </HeadCell>
                </th>
                <th><HeadCell><Label>Date modified</Label></HeadCell></th>
                <th><HeadCell><Label>Type</Label></HeadCell></th>
                <th><HeadCell><Label>Size</Label></HeadCell></th>
              </tr>
            </thead>
            <tbody>
              {files.map((f) => (
                <tr key={f.name}>
                  <td><FileName>{f.icon}{f.name}</FileName></td>
                  <td>{stamp}</td>
                  <td><Clip>{f.type}</Clip></td>
                  <SizeCell>{f.size}</SizeCell>
                </tr>
              ))}
            </tbody>
          </FileTable>
        </FilePane>
      </Body>

      <StatusBar>
        <StatusText>7 items</StatusText>
        <ViewButtons>
          <ViewButton $on $w={31} $h={31} aria-label="Details view"><Glyph w={15} h={15} d="M1 2.500h13M1 6.500h13M1 10.500h13M1 14.500h13" c="#555" /></ViewButton>
          <ViewButton $w={30} $h={31} aria-label="Large icons view"><Glyph w={15} h={15} d="M.5 14.500h14M1 1.500h13v10H1z" c="#444" /></ViewButton>
        </ViewButtons>
      </StatusBar>

      <Taskbar>
        <Weather>
          <WeatherIcon><ThermometerIcon /><Badge>3</Badge></WeatherIcon>
          <span><Line>Temps to drop</Line><Line $dim>Sunday</Line></span>
        </Weather>
        <TaskCluster>
          <IconButton $w={56} $h={50} aria-label="Start"><StartIcon /></IconButton>
          <TaskSearch>
            <Glyph w={19} d="M12.500 12.500l5 5" c="#1f1f2b" s={2}><circle cx="8" cy="8" r="6.500" /></Glyph>
            <TextInput type="text" placeholder="Search" aria-label="Search" />
            <MapleIcon />
          </TaskSearch>
          {tasks.map((t) => (
            <TaskButton key={t.name} $active={t.active} aria-label={t.name}>
              {t.icon}
              {t.run && <RunMark $active={t.active} />}
            </TaskButton>
          ))}
        </TaskCluster>
        <Tray>
          <TrayButton $w={40} aria-label="Hidden icons"><Glyph w={16} h={10} d="M2 8l6-6 6 6" c="#fff" s={1.8} /></TrayButton>
          <TrayButton $w={40} aria-label="OneDrive"><TrayCloud /></TrayButton>
          <TrayButton $w={56}><span><Line>ENG</Line><Line>US</Line></span></TrayButton>
          <TrayStatus aria-label="Network, volume, battery">
            <Glyph w={20} h={16} d="M1 6a12.500 12.500 0 0 1 18 0M3.800 8.800a8.700 8.700 0 0 1 12.400 0M6.500 11.500a5 5 0 0 1 7 0" c="#fff" s={1.5}><circle cx="10" cy="14" r="1.300" fill="#fff" stroke="none" /></Glyph>
            <Glyph w={20} h={18} d="M1 6.500h3L8.500 2v14L4 11.500H1zM11.500 6q2 3 0 6M14 4q3.500 5 0 10M16.500 2q5 7 0 14" c="#fff" s={1.4} />
            <svg width="26" height="18" viewBox="0 0 26 18" aria-hidden>
              <rect x="1" y="4" width="21.500" height="11.500" rx="3" fill="none" stroke="#fff" strokeWidth="1.500" />
              <path d="M24.500 7.500v4.500" stroke="#fff" strokeWidth="1.800" strokeLinecap="round" />
              <rect x="3" y="6" width="13" height="7.500" rx="1" fill="#8fd694" />
              <path d="M12.500 0L8 7h3l-1 5 5-7h-3z" fill="#fff" stroke="#21201e" strokeWidth=".6" />
            </svg>
          </TrayStatus>
          <Clock><Line>5:53 PM</Line><Line>2026-07-01</Line></Clock>
        </Tray>
      </Taskbar>
    </Screen>
  );
}
